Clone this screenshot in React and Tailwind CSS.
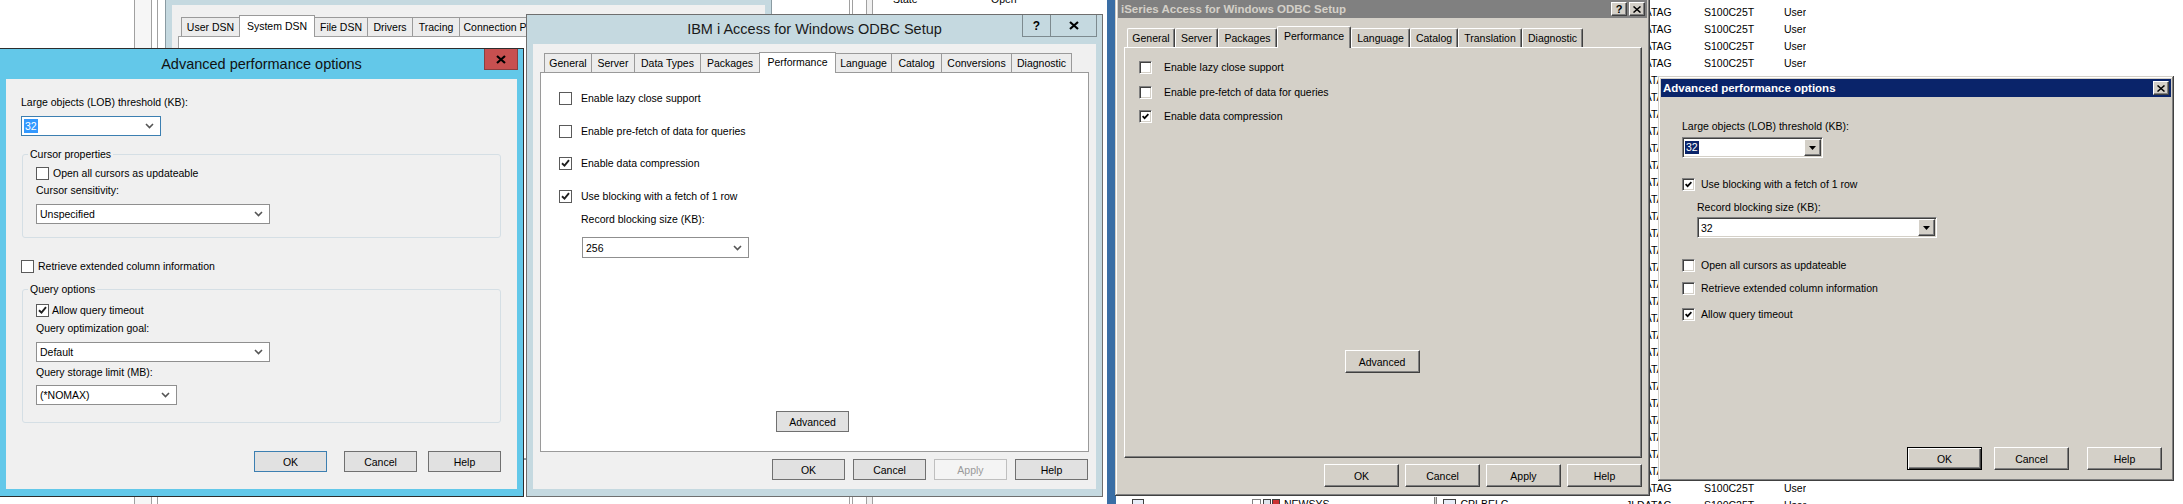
import React from "react";

const raised =
  "border border-t-white border-l-white border-r-[#404040] border-b-[#404040] shadow-[inset_-1px_-1px_#808080]";
const sunken =
  "border border-t-[#808080] border-l-[#808080] border-r-white border-b-white shadow-[inset_1px_1px_#404040,inset_-1px_-1px_#d4d0c8]";
const classicWin =
  "shadow-[inset_-1px_-1px_#404040,inset_1px_1px_#d4d0c8,inset_-2px_-2px_#808080,inset_2px_2px_#ffffff]";

/* ---------- Windows 8 style pieces ---------- */
function W8Check({ checked }) {
  return (
    <span className="flex h-[13px] w-[13px] shrink-0 items-center justify-center border border-[#5a5a5a] bg-white">
      {checked ? (
        <svg width="9" height="8" viewBox="0 0 9 8">
          <path d="M1 4.2L3.5 6.6L8 1.2" fill="none" stroke="#1f1f1f" strokeWidth="1.9" />
        </svg>
      ) : null}
    </span>
  );
}

function W8CheckRow({ checked, gap, children }) {
  return (
    <div className={`flex h-[14px] items-center ${gap}`}>
      <W8Check checked={checked} />
      <span className="whitespace-nowrap">{children}</span>
    </div>
  );
}

function Chevron() {
  return (
    <svg width="9" height="6" viewBox="0 0 9 6" className="shrink-0">
      <path d="M1 1l3.5 3.5L8 1" fill="none" stroke="#555" strokeWidth="1.6" />
    </svg>
  );
}

function W8Combo({ className, children, selected }) {
  return (
    <div className={`flex shrink-0 items-center justify-between self-start border bg-white pl-[2px] pr-[6px] ${className}`}>
      {selected ? (
        <span className="bg-[#3399ff] px-[1px] leading-[14px] text-white">{children}</span>
      ) : (
        <span className="whitespace-nowrap pl-[1px]">{children}</span>
      )}
      <Chevron />
    </div>
  );
}

function W8Button({ children, className }) {
  return (
    <div className={`flex h-[21px] w-[73px] shrink-0 items-center justify-center border ${className}`}>{children}</div>
  );
}

function W8Tab({ label, w, selected }) {
  return selected ? (
    <div className={`relative z-10 -mb-px -ml-px flex h-[21px] items-center justify-center border border-b-0 border-[#9a9a9a] bg-white pb-[2px] ${w}`}>
      {label}
    </div>
  ) : (
    <div className={`-ml-px flex h-[19px] items-center justify-center border border-b-0 border-[#9a9a9a] bg-[#ececec] ${w}`}>
      {label}
    </div>
  );
}

/* ---------- Classic style pieces ---------- */
function CCheck({ checked }) {
  return (
    <span className={`flex h-[13px] w-[13px] shrink-0 items-center justify-center bg-white ${sunken}`}>
      {checked ? (
        <svg width="7" height="7" viewBox="0 0 7 7">
          <path d="M0.6 3.2L2.6 5.2L6.4 1.2" fill="none" stroke="#000" strokeWidth="1.7" />
        </svg>
      ) : null}
    </span>
  );
}

function CCheckRow({ checked, gap, children }) {
  return (
    <div className={`flex h-[14px] items-center ${gap}`}>
      <CCheck checked={checked} />
      <span className="whitespace-nowrap">{children}</span>
    </div>
  );
}

function CButton({ children, className, def }) {
  return (
    <div
      className={`flex h-[23px] w-[75px] shrink-0 items-center justify-center bg-[#d4d0c8] ${
        def
          ? "border border-black shadow-[inset_1px_1px_#ffffff,inset_-1px_-1px_#404040,inset_-2px_-2px_#808080]"
          : raised
      } ${className}`}
    >
      {children}
    </div>
  );
}

function CCombo({ className, children, selected }) {
  return (
    <div className={`flex h-[21px] shrink-0 self-start bg-white p-[1px] ${sunken} ${className}`}>
      <div className="flex flex-1 items-center pl-[1px]">
        {selected ? (
          <span className="bg-[#0a246a] px-[1px] leading-[13px] text-white">{children}</span>
        ) : (
          <span className="pl-[1px]">{children}</span>
        )}
      </div>
      <div className={`flex w-[17px] items-center justify-center bg-[#d4d0c8] ${raised}`}>
        <svg width="7" height="4" viewBox="0 0 7 4">
          <path d="M0 0h7L3.5 4z" fill="#000" />
        </svg>
      </div>
    </div>
  );
}

function CTab({ label, w, selected }) {
  return selected ? (
    <div className={`relative z-10 -mb-px flex h-[22px] items-center justify-center rounded-t-[2px] border-l border-t border-r border-l-white border-t-white border-r-[#404040] bg-[#d4d0c8] pb-[3px] shadow-[inset_-1px_0_#808080] ${w}`}>
      {label}
    </div>
  ) : (
    <div className={`flex h-[19px] items-center justify-center rounded-t-[2px] border-l border-t border-r border-l-white border-t-white border-r-[#404040] bg-[#d4d0c8] shadow-[inset_-1px_0_#808080] ${w}`}>
      {label}
    </div>
  );
}

function CapBtn({ children }) {
  return (
    <div className={`flex h-[14px] w-[16px] items-center justify-center bg-[#d4d0c8] ${raised}`}>{children}</div>
  );
}

function XGlyph() {
  return (
    <svg width="8" height="7" viewBox="0 0 8 7">
      <path d="M0.5 0.5l7 6M7.5 0.5l-7 6" stroke="#000" strokeWidth="1.5" />
    </svg>
  );
}

const ibmTabs = [
  ["General", "w-[48px]"],
  ["Server", "w-[44px]"],
  ["Data Types", "w-[67px]"],
  ["Packages", "w-[60px]"],
  ["Performance", "w-[77px]"],
  ["Language", "w-[57px]"],
  ["Catalog", "w-[51px]"],
  ["Conversions", "w-[71px]"],
  ["Diagnostic", "w-[61px]"],
];

const isTabs = [
  ["General", "w-[48px]"],
  ["Server", "w-[43px]"],
  ["Packages", "w-[59px]"],
  ["Performance", "w-[74px]"],
  ["Language", "w-[59px]"],
  ["Catalog", "w-[48px]"],
  ["Translation", "w-[64px]"],
  ["Diagnostic", "w-[61px]"],
];

const adminTabs = [
  ["User DSN", "w-[59px]"],
  ["System DSN", "w-[76px]"],
  ["File DSN", "w-[54px]"],
  ["Drivers", "w-[46px]"],
  ["Tracing", "w-[48px]"],
  ["Connection Pooling", "w-[100px]"],
];

const listRows = Array.from({ length: 30 }, (_, i) => i);

function ListRow({ k }) {
  if (k >= 4 && k <= 27) {
    // only a sliver of the name column shows between the two dialogs
    return (
      <div className="flex h-[17px] w-[8px] overflow-hidden leading-[17px]">
        <span className="-ml-[24px] shrink-0">JLDATAG</span>
      </div>
    );
  }
  return (
    <div className={`flex h-[17px] leading-[17px] ${k === 29 ? "" : "overflow-hidden"}`}>
      <span className="-ml-[24px] w-[78px] shrink-0">JLDATAG</span>
      <span className="w-[80px] shrink-0">S100C25T</span>
      <span className="shrink-0">User</span>
    </div>
  );
}

export default function App() {
  return (
    <div className="relative h-[504px] w-[2183px] overflow-hidden bg-white font-['Liberation_Sans',Arial,sans-serif] text-[10.5px] leading-[14px] text-black">
      {/* background: left splitter lines */}
      <div className="absolute left-[134px] top-0 flex h-full">
        <div className="w-px bg-[#a0a0a0]" />
        <div className="w-[16px] bg-[#f6f6f6]" />
        <div className="w-px bg-[#a0a0a0]" />
        <div className="w-[5px] bg-white" />
        <div className="w-px bg-[#a0a0a0]" />
      </div>

      {/* background: ODBC Data Source Administrator */}
      <div className="absolute left-[165px] top-[-20px] h-[480px] w-[607px] border border-[#8a9ba2] bg-[#c5d9e0] px-[6px] pt-[24px]">
        <div className="flex h-full flex-col bg-[#f0f0f0] pt-[10px]">
          <div className="ml-[10px] flex h-[21px] items-end">
            {adminTabs.map(([t, w], i) =>
              i === 1 ? (
                <div key={t} className={`relative z-10 -mb-px -ml-px flex h-[22px] items-center justify-center border border-b-0 border-[#9a9a9a] bg-white pb-[2px] ${w}`}>
                  {t}
                </div>
              ) : (
                <div key={t} className={`-ml-px flex h-[19px] items-center justify-center border border-b-0 border-[#9a9a9a] bg-[#ececec] ${w}`}>
                  {t}
                </div>
              )
            )}
          </div>
          <div className="ml-[6px] flex-1 border border-[#a0a0a0] bg-white" />
        </div>
      </div>

      {/* background: properties pane above IBM dialog */}
      <div className="absolute left-[849px] top-0 flex h-full">
        <div className="w-px bg-[#a0a0a0]" />
        <div className="w-[2px] bg-white" />
        <div className="w-px bg-[#a0a0a0]" />
        <div className="w-[13px] bg-white" />
        <div className="w-px bg-[#a0a0a0]" />
        <div className="w-[5px] bg-[#f0f0f0]" />
        <div className="w-px bg-[#a0a0a0]" />
      </div>
      <div className="absolute left-[893px] top-[-8px] flex">
        <span className="w-[98px]">State</span>
        <span>Open</span>
      </div>

      {/* background: desktop strip */}
      <div className="absolute left-[1107px] top-0 h-full w-[9px] bg-[#3a6ea5]" />

      {/* background: list of libraries */}
      <div className="absolute left-[1650px] top-0 flex flex-col pt-[4px]">
        {listRows.map((k) => (
          <ListRow key={k} k={k} />
        ))}
      </div>
      <div className="absolute left-[1132px] top-[497px] flex h-[12px] items-start">
        <div className="mt-[2px] h-[10px] w-[12px] border border-[#404040] bg-[#e8eef8]" />
        <div className="ml-[108px] mt-[2px] h-[9px] w-[9px] border border-[#808080] bg-white" />
        <div className="ml-[2px] mt-[2px] h-[10px] w-[8px] border border-[#404040] bg-[#dfe6ee]" />
        <div className="ml-[1px] mt-[2px] h-[10px] w-[8px] border border-[#404040] bg-[#cc3333]" />
        <span className="ml-[4px] leading-[14px]">NEWSYS</span>
        <div className="ml-[104px] h-[12px] w-[3px] border-x border-[#808080] bg-[#d4d0c8]" />
        <div className="ml-[6px] mt-[2px] h-[10px] w-[13px] border border-[#404040] bg-[#e8eef8]" />
        <span className="ml-[5px] leading-[14px]">CPLBELC</span>
      </div>

      {/* ===== Windows 8: Advanced performance options (active) ===== */}
      <div className="absolute left-[-1px] top-[48px] flex h-[449px] w-[525px] flex-col border border-[#2d2d2d] bg-[#63c8e9]">
        <div className="grid h-[30px] grid-cols-[60px_1fr_60px]">
          <div />
          <div className="flex items-center justify-center pb-[1px] text-[14.5px] leading-[18px] text-[#111]">
            Advanced performance options
          </div>
          <div className="flex items-start justify-end pr-[5px]">
            <div className="flex h-[21px] w-[34px] items-center justify-center border border-t-0 border-[#8a3f3f] bg-[#c75050]">
              <svg width="10" height="9" viewBox="0 0 10 9">
                <path d="M1 1l8 7M9 1l-8 7" stroke="#000" strokeWidth="2.2" />
              </svg>
            </div>
          </div>
        </div>
        <div className="mx-[6px] mb-[7px] flex flex-1 flex-col bg-[#f0f0f0] pl-[15px] pr-[16px] pt-[16px]">
          <div className="h-[14px]">Large objects (LOB) threshold (KB):</div>
          <W8Combo className="mt-[7px] h-[20px] w-[140px] border-[#3c7fb1]" selected>
            32
          </W8Combo>

          <fieldset className="ml-[1px] mt-[11px] w-[479px] rounded-[3px] border border-[#d5dfe5] pb-[13px]">
            <legend className="ml-[5px] px-[2px] leading-[14px]">Cursor properties</legend>
            <div className="flex flex-col pl-[13px]">
              <div className="mt-[5px]">
                <W8CheckRow gap="gap-[4px]">Open all cursors as updateable</W8CheckRow>
              </div>
              <div className="mt-[3px] h-[14px]">Cursor sensitivity:</div>
              <W8Combo className="mt-[7px] h-[20px] w-[234px] border-[#8f8f8f]">Unspecified</W8Combo>
            </div>
          </fieldset>

          <div className="mt-[21px]">
            <W8CheckRow gap="gap-[4px]">Retrieve extended column information</W8CheckRow>
          </div>

          <fieldset className="ml-[1px] mt-[9px] w-[479px] rounded-[3px] border border-[#d5dfe5] pb-[17px]">
            <legend className="ml-[5px] px-[2px] leading-[14px]">Query options</legend>
            <div className="flex flex-col pl-[13px]">
              <div className="mt-[7px]">
                <W8CheckRow checked gap="gap-[3px]">Allow query timeout</W8CheckRow>
              </div>
              <div className="mt-[4px] h-[14px]">Query optimization goal:</div>
              <W8Combo className="mt-[7px] h-[20px] w-[234px] border-[#8f8f8f]">Default</W8Combo>
              <div className="mt-[3px] h-[14px]">Query storage limit (MB):</div>
              <W8Combo className="mt-[6px] h-[20px] w-[141px] border-[#8f8f8f]">(*NOMAX)</W8Combo>
            </div>
          </fieldset>

          <div className="mt-[28px] flex justify-end">
            <W8Button className="mr-[17px] border-[#3c7fb1] bg-[#e1e1e1]">OK</W8Button>
            <W8Button className="mr-[11px] border-[#707070] bg-[#e1e1e1]">Cancel</W8Button>
            <W8Button className="border-[#707070] bg-[#e1e1e1]">Help</W8Button>
          </div>
        </div>
      </div>

      {/* ===== Windows 8: IBM i Access for Windows ODBC Setup (inactive) ===== */}
      <div className="absolute left-[526px] top-[14px] flex h-[483px] w-[577px] flex-col border border-[#6f6f6f] bg-[#c5d9e0]">
        <div className="grid h-[29px] grid-cols-[90px_1fr_90px]">
          <div />
          <div className="flex items-center justify-center pb-[1px] text-[14.5px] leading-[18px] text-[#1a1a1a]">
            IBM i Access for Windows ODBC Setup
          </div>
          <div className="flex items-start justify-end pr-[5px]">
            <div className="flex h-[22px] border border-t-0 border-[#7d8a8f]">
              <div className="flex w-[28px] items-center justify-center border-r border-[#7d8a8f] text-[12px] font-bold">
                ?
              </div>
              <div className="flex w-[45px] items-center justify-center">
                <svg width="10" height="9" viewBox="0 0 10 9">
                  <path d="M1 1l8 7M9 1l-8 7" stroke="#000" strokeWidth="2.2" />
                </svg>
              </div>
            </div>
          </div>
        </div>
        <div className="mx-[6px] mb-[7px] flex flex-1 flex-col bg-[#f0f0f0] px-[7px] pt-[8px]">
          <div className="ml-[5px] flex h-[20px] items-end">
            {ibmTabs.map(([t, w]) => (
              <W8Tab key={t} label={t} w={w} selected={t === "Performance"} />
            ))}
          </div>
          <div className="flex h-[380px] flex-col border border-[#9a9a9a] bg-white">
            <div className="flex flex-col pl-[18px] pt-[18px]">
              <W8CheckRow gap="gap-[9px]">Enable lazy close support</W8CheckRow>
              <div className="mt-[19px]">
                <W8CheckRow gap="gap-[9px]">Enable pre-fetch of data for queries</W8CheckRow>
              </div>
              <div className="mt-[18px]">
                <W8CheckRow checked gap="gap-[9px]">Enable data compression</W8CheckRow>
              </div>
              <div className="mt-[19px]">
                <W8CheckRow checked gap="gap-[9px]">Use blocking with a fetch of 1 row</W8CheckRow>
              </div>
              <div className="mt-[9px] h-[14px] pl-[22px]">Record blocking size (KB):</div>
              <W8Combo className="ml-[23px] mt-[11px] h-[21px] w-[167px] border-[#8f8f8f]">256</W8Combo>
            </div>
            <div className="mb-[19px] mt-auto flex justify-center pr-[4px]">
              <W8Button className="border-[#707070] bg-[#e1e1e1]">Advanced</W8Button>
            </div>
          </div>
          <div className="mt-[7px] flex justify-end gap-[8px] pr-[1px]">
            <W8Button className="border-[#707070] bg-[#e1e1e1]">OK</W8Button>
            <W8Button className="border-[#707070] bg-[#e1e1e1]">Cancel</W8Button>
            <W8Button className="border-[#bfbfbf] bg-[#f4f4f4] text-[#9a9a9a]">Apply</W8Button>
            <W8Button className="border-[#707070] bg-[#e1e1e1]">Help</W8Button>
          </div>
        </div>
      </div>

      {/* ===== Classic: iSeries Access for Windows ODBC Setup ===== */}
      <div className={`absolute left-[1115px] top-[-3px] flex h-[499px] w-[535px] flex-col bg-[#d4d0c8] p-[3px] ${classicWin}`}>
        <div className="flex h-[18px] shrink-0 items-center bg-[#808080] pl-[3px] pr-[2px]">
          <span className="text-[11.5px] font-bold leading-[14px] text-[#d4d0c8]">
            iSeries Access for Windows ODBC Setup
          </span>
          <div className="ml-auto flex gap-[2px]">
            <CapBtn>
              <span className="text-[11px] font-bold leading-[11px]">?</span>
            </CapBtn>
            <CapBtn>
              <XGlyph />
            </CapBtn>
          </div>
        </div>
        <div className="flex flex-1 flex-col pl-[6px] pr-[5px] pt-[8px]">
          <div className="ml-[3px] flex h-[21px] items-end">
            {isTabs.map(([t, w]) => (
              <CTab key={t} label={t} w={w} selected={t === "Performance"} />
            ))}
          </div>
          <div className="flex h-[411px] flex-col border border-t-white border-l-white border-r-[#404040] border-b-[#404040] bg-[#d4d0c8] shadow-[inset_-1px_-1px_#808080]">
            <div className="flex flex-col pl-[14px] pt-[12px]">
              <CCheckRow gap="gap-[12px]">Enable lazy close support</CCheckRow>
              <div className="mt-[11px]">
                <CCheckRow gap="gap-[12px]">Enable pre-fetch of data for queries</CCheckRow>
              </div>
              <div className="mt-[10px]">
                <CCheckRow checked gap="gap-[12px]">Enable data compression</CCheckRow>
              </div>
            </div>
            <div className="mt-[227px] flex justify-center pr-[2px]">
              <CButton className="">Advanced</CButton>
            </div>
          </div>
          <div className="mt-[6px] flex justify-end gap-[6px]">
            <CButton className="">OK</CButton>
            <CButton className="">Cancel</CButton>
            <CButton className="">Apply</CButton>
            <CButton className="">Help</CButton>
          </div>
        </div>
      </div>

      {/* ===== Classic: Advanced performance options ===== */}
      <div className={`absolute left-[1658px] top-[76px] flex h-[405px] w-[516px] flex-col bg-[#d4d0c8] p-[3px] ${classicWin}`}>
        <div className="flex h-[18px] shrink-0 items-center bg-[#0a246a] pl-[2px] pr-[2px]">
          <span className="text-[11.5px] font-bold leading-[14px] text-white">Advanced performance options</span>
          <div className="ml-auto">
            <CapBtn>
              <XGlyph />
            </CapBtn>
          </div>
        </div>
        <div className="flex flex-1 flex-col pl-[21px]">
          <div className="mt-[22px] h-[14px]">Large objects (LOB) threshold (KB):</div>
          <CCombo className="mt-[4px] w-[141px]" selected>
            32
          </CCombo>
          <div className="mt-[19px]">
            <CCheckRow checked gap="gap-[6px]">Use blocking with a fetch of 1 row</CCheckRow>
          </div>
          <div className="ml-[15px] mt-[9px] h-[14px]">Record blocking size (KB):</div>
          <CCombo className="ml-[15px] mt-[3px] w-[240px]">32</CCombo>
          <div className="mt-[20px]">
            <CCheckRow gap="gap-[6px]">Open all cursors as updateable</CCheckRow>
          </div>
          <div className="mt-[9px]">
            <CCheckRow gap="gap-[6px]">Retrieve extended column information</CCheckRow>
          </div>
          <div className="mt-[12px]">
            <CCheckRow checked gap="gap-[6px]">Allow query timeout</CCheckRow>
          </div>
          <div className="mt-[126px] flex justify-end pr-[9px]">
            <CButton className="mr-[12px]" def>
              OK
            </CButton>
            <CButton className="mr-[18px]">Cancel</CButton>
            <CButton className="">Help</CButton>
          </div>
        </div>
      </div>
    </div>
  );
}
